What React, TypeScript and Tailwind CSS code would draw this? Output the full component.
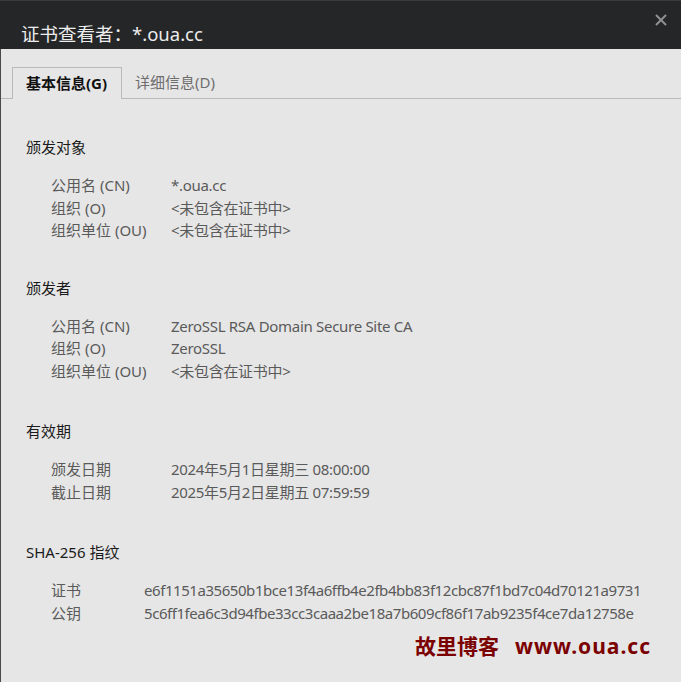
import React from "react";

const font = { fontFamily: '"Noto Sans", "Noto Sans CJK SC", sans-serif' };

type Row = [string, string];

function Section({ title, rows, labelW, valueCls, pt }: { title: string; rows: Row[]; labelW: string; valueCls: string; pt: string }) {
  return (
    <div className={pt}>
      <div className="pl-[25px] text-[15px] leading-[22px] text-[#1b1b1b]">{title}</div>
      <div className="mt-[16px] pl-[50px]">
        {rows.map(([k, v]) => (
          <div key={k} className="flex text-[15px] leading-[22.5px] text-[#5a5a5a]">
            <div className={labelW}>{k}</div>
            <div className={valueCls}>{v}</div>
          </div>
        ))}
      </div>
    </div>
  );
}

export default function App() {
  return (
    <div style={font} className="w-[681px] h-[682px] overflow-hidden bg-[#e6e6e6] flex flex-col">
      <div className="h-[49px] shrink-0 bg-[#252628] border-t border-[#3a3b3d] flex justify-between">
        <div className="pl-[21px] pt-[21px] text-[18.5px] leading-[24px] text-[#ececec] whitespace-nowrap">
          证书查看者：*.oua.cc
        </div>
        <div className="mt-[13px] mr-[14px] w-[12px] h-[12px]">
          <svg width="12" height="12" viewBox="0 0 12 12">
            <path d="M1 1 L11 11 M11 1 L1 11" stroke="#8f9092" strokeWidth="2" />
          </svg>
        </div>
      </div>
      <div className="flex-1 border-l border-[#4a4a4a] flex flex-col">
        <div className="mt-[18px] flex items-end border-b border-[#b9b9b9] pl-[11px]">
          <div className="-mb-px h-[32px] w-[110px] border border-b-0 border-[#b9b9b9] bg-[#e6e6e6] pl-[13px] text-[15px] leading-[30px] font-bold text-[#111]">
            基本信息(G)
          </div>
          <div className="h-[31px] pl-[13px] text-[15px] leading-[30px] text-[#6e6e6e]">详细信息(D)</div>
        </div>
        <Section
          pt="pt-[37px]"
          title="颁发对象"
          labelW="w-[120px] shrink-0"
          valueCls="whitespace-nowrap tracking-[-0.3px]"
          rows={[
            ["公用名 (CN)", "*.oua.cc"],
            ["组织 (O)", "<未包含在证书中>"],
            ["组织单位 (OU)", "<未包含在证书中>"],
          ]}
        />
        <Section
          pt="pt-[35px]"
          title="颁发者"
          labelW="w-[120px] shrink-0"
          valueCls="whitespace-nowrap tracking-[-0.3px]"
          rows={[
            ["公用名 (CN)", "ZeroSSL RSA Domain Secure Site CA"],
            ["组织 (O)", "ZeroSSL"],
            ["组织单位 (OU)", "<未包含在证书中>"],
          ]}
        />
        <Section
          pt="pt-[38px]"
          title="有效期"
          labelW="w-[120px] shrink-0"
          valueCls="whitespace-nowrap tracking-[-0.3px]"
          rows={[
            ["颁发日期", "2024年5月1日星期三 08:00:00"],
            ["截止日期", "2025年5月2日星期五 07:59:59"],
          ]}
        />
        <Section
          pt="pt-[38px]"
          title="SHA-256 指纹"
          labelW="w-[93px] shrink-0"
          valueCls="whitespace-nowrap tracking-[-0.44px]"
          rows={[
            ["证书", "e6f1151a35650b1bce13f4a6ffb4e2fb4bb83f12cbc87f1bd7c04d70121a9731"],
            ["公钥", "5c6ff1fea6c3d94fbe33cc3caaa2be18a7b609cf86f17ab9235f4ce7da12758e"],
          ]}
        />
        <div className="mt-[8px] flex justify-end pr-[30px] text-[21px] leading-[28px] font-bold text-[#7b0000] whitespace-nowrap">
          <span>故里博客</span>
          <span className="ml-[16px] tracking-[1px]">www.oua.cc</span>
        </div>
      </div>
    </div>
  );
}
